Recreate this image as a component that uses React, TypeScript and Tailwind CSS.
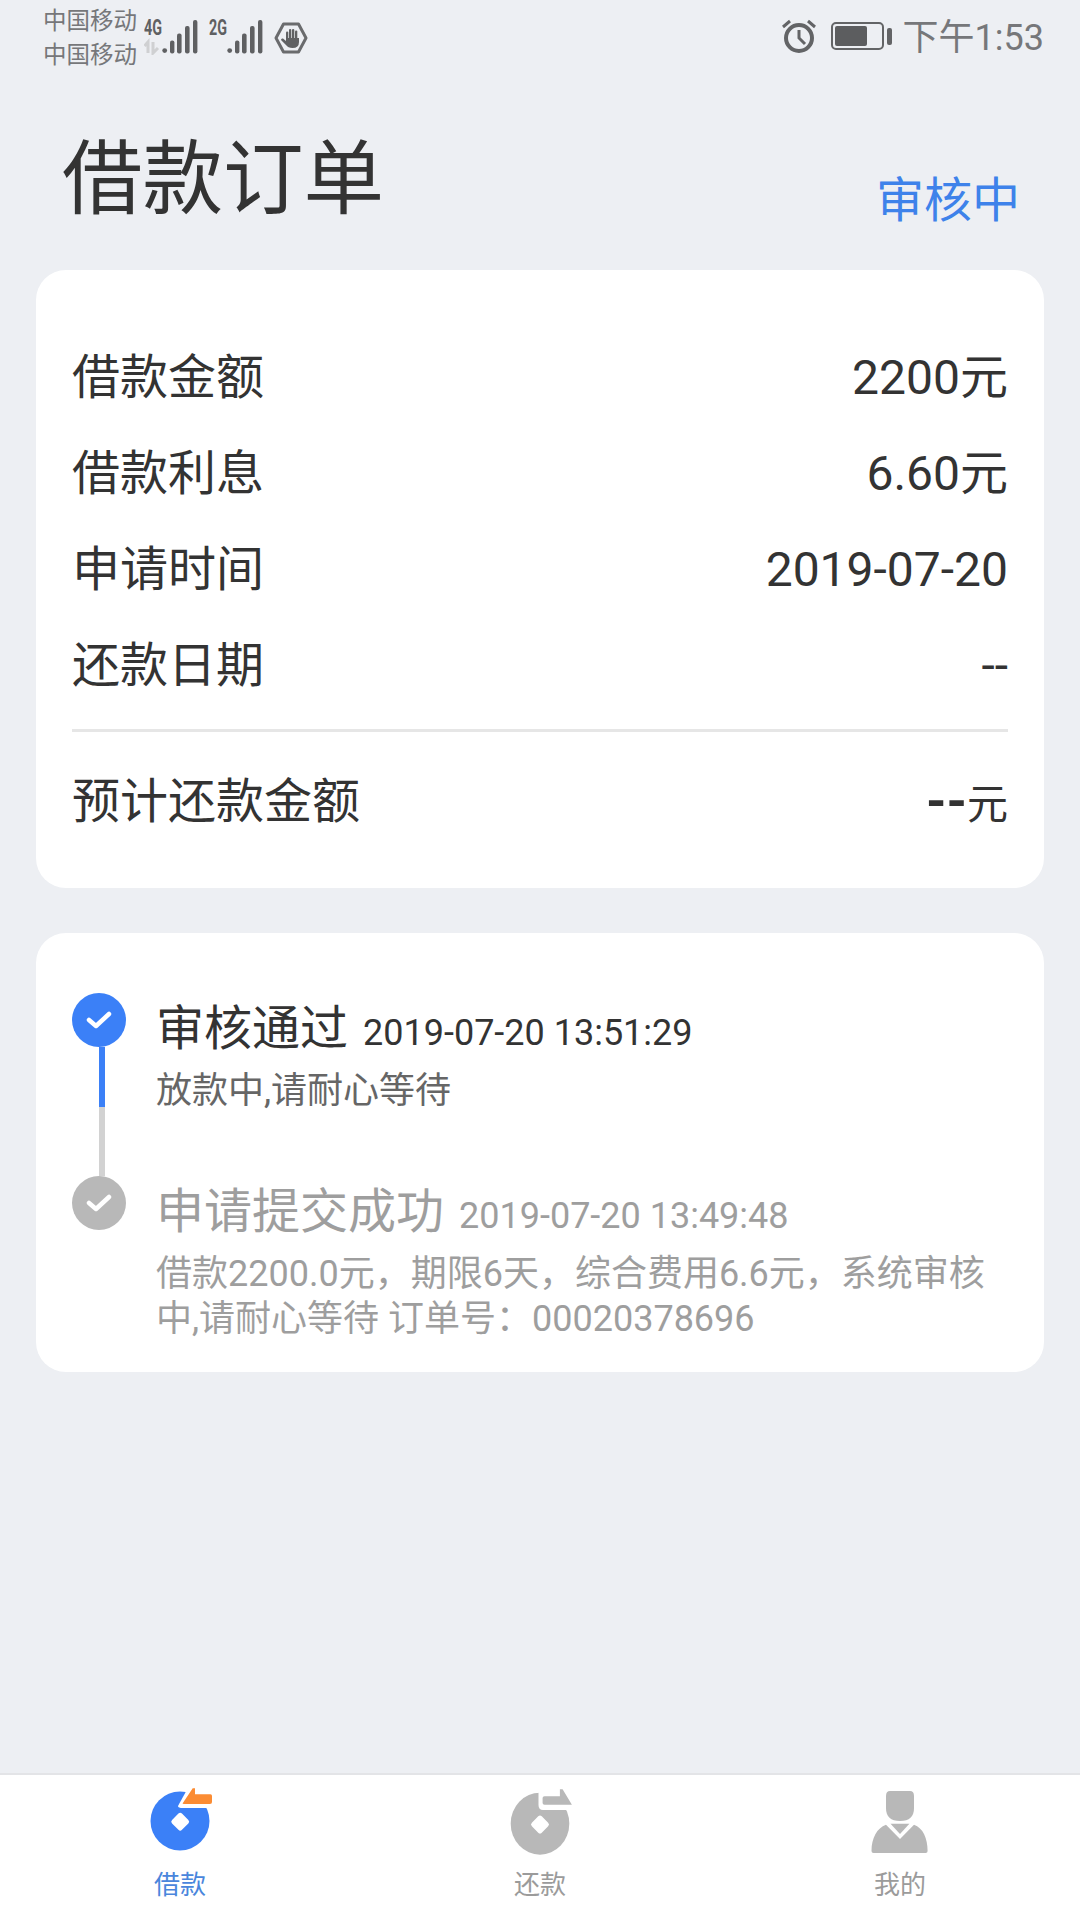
const font = { fontFamily: 'Roboto, "Noto Sans CJK SC", sans-serif' }

function Signal({ label, arrows }: { label: string; arrows?: boolean }) {
  return (
    <svg width="54" height="40" viewBox="0 -4 54 40" className="block -mt-[4px]">
      <text x="0" y="16" fontSize="22" fontWeight="700" fill="#5f6062" textLength="18" lengthAdjust="spacingAndGlyphs" fontFamily="Roboto, sans-serif">{label}</text>
      {arrows && <path d="M4 34V23l-3.5 4M9 23v11l5-5" stroke="#cfd0d2" strokeWidth="3" fill="none" />}
      <circle cx="20.7" cy="31.6" r="2.4" fill="#5f6062" />
      <rect x="26" y="21.6" width="4.4" height="12.8" rx="2" fill="#5f6062" />
      <rect x="33" y="14.4" width="4.6" height="20" rx="2" fill="#5f6062" />
      <rect x="41" y="7" width="4.6" height="27.4" rx="2" fill="#5f6062" />
      <rect x="49" y="1" width="4.4" height="33.4" rx="2" fill="#5f6062" />
    </svg>
  )
}

function StatusBar() {
  return (
    <div className="h-[76px] flex items-start justify-between pl-[43px] pr-[36px] text-[#76777a]">
      <div className="flex items-start">
        <div className="pt-[4px] text-[23.5px] leading-[34px]">
          <p>中国移动</p>
          <p>中国移动</p>
        </div>
        <div className="ml-[7px] mt-[19px]"><Signal label="4G" arrows /></div>
        <div className="ml-[11px] mt-[19px]"><Signal label="2G" /></div>
        <svg width="34" height="32" viewBox="0 0 34 32" className="ml-[11px] mt-[22px]">
          <path d="M9.5 2h15L32 16l-7.5 14h-15L2 16z" fill="none" stroke="#6a6b6d" strokeWidth="3" strokeLinejoin="round" />
          <rect x="12" y="9.5" width="2.3" height="10" rx="1.1" fill="#606163" />
          <rect x="15" y="7" width="2.3" height="12" rx="1.1" fill="#606163" />
          <rect x="18" y="7" width="2.3" height="12" rx="1.1" fill="#606163" />
          <rect x="21" y="8.5" width="2.3" height="11" rx="1.1" fill="#606163" />
          <path d="M12 16H25V20Q25 26 18.5 26Q14 26 12 23L7 18Q7 16 9 16.5L12 19Z" fill="#606163" />
        </svg>
      </div>
      <div className="flex items-start">
        <svg width="36" height="36" viewBox="0 0 36 36" className="mt-[18px]">
          <circle cx="18" cy="20" r="13" fill="none" stroke="#636466" strokeWidth="4" />
          <path d="M18 12v8l6 6" fill="none" stroke="#636466" strokeWidth="3" />
          <path d="M2 9l7-6M34 9l-7-6" fill="none" stroke="#636466" strokeWidth="3" />
        </svg>
        <div className="ml-[14px] mt-[22px] flex items-center">
          <div className="w-[53px] h-[28px] border-2 border-[#636466] rounded-[5px] p-[2px]">
            <div className="w-[32px] h-full bg-[#5c5d5f] rounded-[2px]" />
          </div>
          <div className="ml-[3px] w-[5px] h-[17px] bg-[#636466] rounded-[2px]" />
        </div>
        <span className="ml-[11px] mt-[15px] text-[36px] leading-[46px]">下午1:53</span>
      </div>
    </div>
  )
}

function InfoRow({ label, value }: { label: string; value: React.ReactNode }) {
  return (
    <div className="h-[96px] flex items-center justify-between text-[48px] text-[#333333]">
      <span>{label}</span>
      <span>{value}</span>
    </div>
  )
}

function Dot({ color }: { color: string }) {
  return (
    <div className={`w-[54px] h-[54px] rounded-full flex items-center justify-center shrink-0 ${color}`}>
      <svg width="26" height="20" viewBox="0 0 26 20">
        <path d="M3 10l7 6L23 4" fill="none" stroke="#ffffff" strokeWidth="4.5" strokeLinecap="round" strokeLinejoin="round" />
      </svg>
    </div>
  )
}

function BorrowIcon() {
  return (
    <svg width="70" height="70" viewBox="0 2 70 70" className="block">
      <circle cx="35" cy="35" r="29.5" fill="#3b80f7" />
      <path d="M33 20L44 0H70V22H38Q33 22 33 20Z" fill="#ffffff" />
      <path d="M37.7 17.3L47.7 2.3H50V8.3H65.5Q67 8.3 67 10V16Q67 18 65 18H39Q37 18 37.7 17.3Z" fill="#fb8c33" />
      <rect x="28.2" y="28.7" width="14" height="14" rx="2.5" fill="#ffffff" transform="rotate(45 35.2 35.7)" />
    </svg>
  )
}

function RepayIcon() {
  return (
    <svg width="70" height="70" viewBox="0 0 70 70" className="block">
      <ellipse cx="35" cy="35.7" rx="29.3" ry="31" fill="#b8b8b8" />
      <path d="M38 0H70V22H38Q33.5 22 33.5 17V5Q33.5 0 38 0Z" fill="#ffffff" />
      <path d="M39.5 8.2H54.9V1.3H57.6L66.9 16.8H39.5Q37.6 16.8 37.6 15V10Q37.6 8.2 39.5 8.2Z" fill="#b8b8b8" />
      <rect x="28" y="29.5" width="14" height="14" rx="2.5" fill="#ffffff" transform="rotate(45 35 36.5)" />
    </svg>
  )
}

function MineIcon() {
  return (
    <svg width="70" height="70" viewBox="0 0 70 70" className="block">
      <path d="M25 3H45Q49 3 49 8V20Q49 33 35 33Q21 33 21 20V8Q21 3 25 3Z" fill="#b8b8b8" />
      <path d="M6.5 63C6.5 50 12 40 21 36.7L35 51L49 36.7C58 40 62.6 50 62.6 63Q62.6 65 60.6 65H8.5Q6.5 65 6.5 63Z" fill="#b8b8b8" />
      <path d="M25.5 35.7H44.4L35 46Z" fill="#b8b8b8" />
    </svg>
  )
}

const tabs = [
  { label: '借款', icon: <BorrowIcon />, active: true },
  { label: '还款', icon: <RepayIcon />, active: false },
  { label: '我的', icon: <MineIcon />, active: false },
]

export default function App() {
  return (
    <div style={font} className="w-[1080px] h-[1920px] bg-[#edeff3] flex flex-col overflow-hidden">
      <StatusBar />

      <div className="h-[194px] flex items-start justify-between pl-[62px] pr-[60px]">
        <h1 className="mt-[56px] text-[80.5px] leading-[96px] font-normal text-[#333333]">借款订单</h1>
        <span className="mt-[95px] text-[48px] leading-[60px] text-[#3e82ea]">审核中</span>
      </div>

      <div className="mx-[36px] h-[618px] bg-white rounded-[30px] pt-[60px] pl-[36px] pr-[36px]">
        <InfoRow label="借款金额" value="2200元" />
        <InfoRow label="借款利息" value="6.60元" />
        <InfoRow label="申请时间" value="2019-07-20" />
        <InfoRow label="还款日期" value="--" />
        <div className="mt-[15px] h-[3px] bg-[#e6e6e6]" />
        <div className="h-[96px] mt-[22px] flex items-center justify-between text-[48px] text-[#333333]">
          <span>预计还款金额</span>
          <span className="text-[41px]"><span className="text-[52px] font-bold">--</span>元</span>
        </div>
      </div>

      <div className="mt-[45px] mx-[36px] h-[439px] bg-white rounded-[30px] pt-[60px] pl-[36px] pr-[24px]">
        <div className="flex h-[183px]">
          <div className="w-[54px] flex flex-col items-center">
            <Dot color="bg-[#3b80f7]" />
            <div className="ml-[6px] w-[6px] h-[60px] bg-[#3b80f7]" />
            <div className="ml-[6px] w-[6px] h-[69px] bg-[#d2d2d2]" />
          </div>
          <div className="ml-[30px] pt-[8px]">
            <div className="flex items-baseline h-[56px] text-[#333333]">
              <span className="text-[48px] leading-[56px]">审核通过</span>
              <span className="ml-[15px] text-[36px]">2019-07-20 13:51:29</span>
            </div>
            <p className="mt-[12px] text-[36px] leading-[45px] text-[#666666]">放款中,请耐心等待</p>
          </div>
        </div>
        <div className="flex">
          <Dot color="bg-[#b8b8b8]" />
          <div className="ml-[30px] pt-[8px] text-[#9e9e9e]">
            <div className="flex items-baseline h-[56px]">
              <span className="text-[48px] leading-[56px]">申请提交成功</span>
              <span className="ml-[15px] text-[36px]">2019-07-20 13:49:48</span>
            </div>
            <p className="mt-[12px] w-[851px] text-[36px] leading-[45px]">借款2200.0元，期限6天，综合费用6.6元，系统审核中,请耐心等待 订单号：00020378696</p>
          </div>
        </div>
      </div>

      <div className="mt-auto h-[147px] bg-white border-t-2 border-[#e3e4e7] flex">
        {tabs.map(tab => (
          <div key={tab.label} className="flex-1 flex flex-col items-center pt-[13px]">
            {tab.icon}
            <span className={`mt-[11px] text-[26px] leading-[32px] ${tab.active ? 'text-[#4a86dc]' : 'text-[#9b9b9b]'}`}>{tab.label}</span>
          </div>
        ))}
      </div>
    </div>
  )
}
